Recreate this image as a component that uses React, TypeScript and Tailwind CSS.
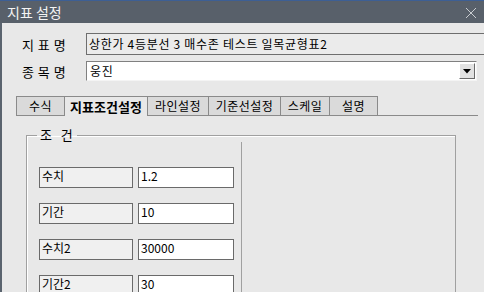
import React from "react";

const rows = [
  { label: "수치", value: "1.2" },
  { label: "기간", value: "10" },
  { label: "수치2", value: "30000" },
  { label: "기간2", value: "30" },
];

const tabs = [
  { name: "수식", w: "w-[48px]" },
  { name: "지표조건설정", w: "w-[83px]", active: true },
  { name: "라인설정", w: "w-[61px]" },
  { name: "기준선설정", w: "w-[72px]" },
  { name: "스케일", w: "w-[49px]" },
  { name: "설명", w: "w-[49px]", last: true },
];

export default function App() {
  return (
    <div className="w-[484px] h-[292px] overflow-hidden bg-[#e8e8e8] flex flex-col text-[12px] text-black font-['Noto_Sans_CJK_KR','Noto_Sans',sans-serif]">
      <div className="h-[23px] shrink-0 bg-[#58606a] border-t border-[#3d5f94] flex items-center justify-between pl-[7px] pr-[7px] text-[14px] text-[#f4f4f4]">
        <span className="leading-none">지표 설정</span>
        <svg width="12" height="12" viewBox="0 0 12 12" className="mt-[1px]">
          <path d="M1 1 L11 11 M11 1 L1 11" stroke="#c8ccd0" strokeWidth="1" fill="none" />
        </svg>
      </div>
      <div className="flex-1 border-l-2 border-[#5a636e] flex flex-col">
        <div className="mt-[10px] flex items-center h-[22px]">
          <div className="w-[84px] pl-[20px] text-[13px] leading-none whitespace-pre tracking-[0.5px]">지 표 명</div>
          <div className="flex-1 -mr-[2px] h-[22px] border border-[#6e6e6e] bg-[#ebebeb] px-[2px] flex items-center leading-none tracking-[0.7px]">
            상한가 4등분선 3 매수존 테스트 일목균형표2
          </div>
        </div>
        <div className="mt-[6px] flex items-center h-[20px]">
          <div className="w-[84px] pl-[20px] text-[13px] leading-none whitespace-pre tracking-[0.5px]">종 목 명</div>
          <div className="w-[391px] h-[20px] bg-white border-t border-l border-[#808080] border-r border-b border-r-[#f4f4f4] border-b-[#f4f4f4] flex items-center">
            <span className="flex-1 pl-[3px] leading-none tracking-[0.7px]">웅진</span>
            <div className="w-[16px] h-[16px] mr-[1px] bg-[#e2e2e2] border border-t-white border-l-white border-r-[#6a6a6a] border-b-[#6a6a6a] flex items-center justify-center">
              <svg width="8" height="5" viewBox="0 0 8 5">
                <path d="M0 0 H8 L4 4.5 Z" fill="#000" />
              </svg>
            </div>
          </div>
        </div>
        <div className="mt-[15px] ml-[14px] w-[462px] flex h-[20px]">
          {tabs.map((t) => (
            <div
              key={t.name}
              className={
                t.w +
                " h-[20px] border-t border-l border-[#8a8a8a] flex items-center justify-center leading-none " +
                (t.active ? "bg-[#e8e8e8] font-bold text-[13px] border-b-0" : "bg-[#dadada] border-b tracking-[0.5px]") +
                (t.last ? " border-r" : "")
              }
            >
              {t.name}
            </div>
          ))}
          <div className="flex-1 border-b border-[#8a8a8a]" />
        </div>
        <fieldset className="mt-[12px] ml-[24px] w-[430px] h-[200px] shrink-0 border border-[#a0a0a0] shadow-[inset_1px_1px_0_#ffffff]">
          <legend className="ml-[10px] px-[3px] whitespace-pre text-[13px] leading-[14px] tracking-[1px]">{"조  건"}</legend>
          <div className="w-[215px] h-[200px] border-r border-[#a0a0a0] pl-[12px] pt-[25px] flex flex-col gap-[15px]">
            {rows.map((r) => (
              <div key={r.label} className="flex gap-[5px] h-[21px] shrink-0">
                <div className="w-[94px] h-[21px] border border-[#6a6a6a] bg-[#f0f0f0] pl-[2px] leading-[15px]">{r.label}</div>
                <div className="w-[96px] h-[21px] border border-[#6a6a6a] bg-white pl-[2px] leading-[15px]">{r.value}</div>
              </div>
            ))}
          </div>
        </fieldset>
      </div>
    </div>
  );
}
